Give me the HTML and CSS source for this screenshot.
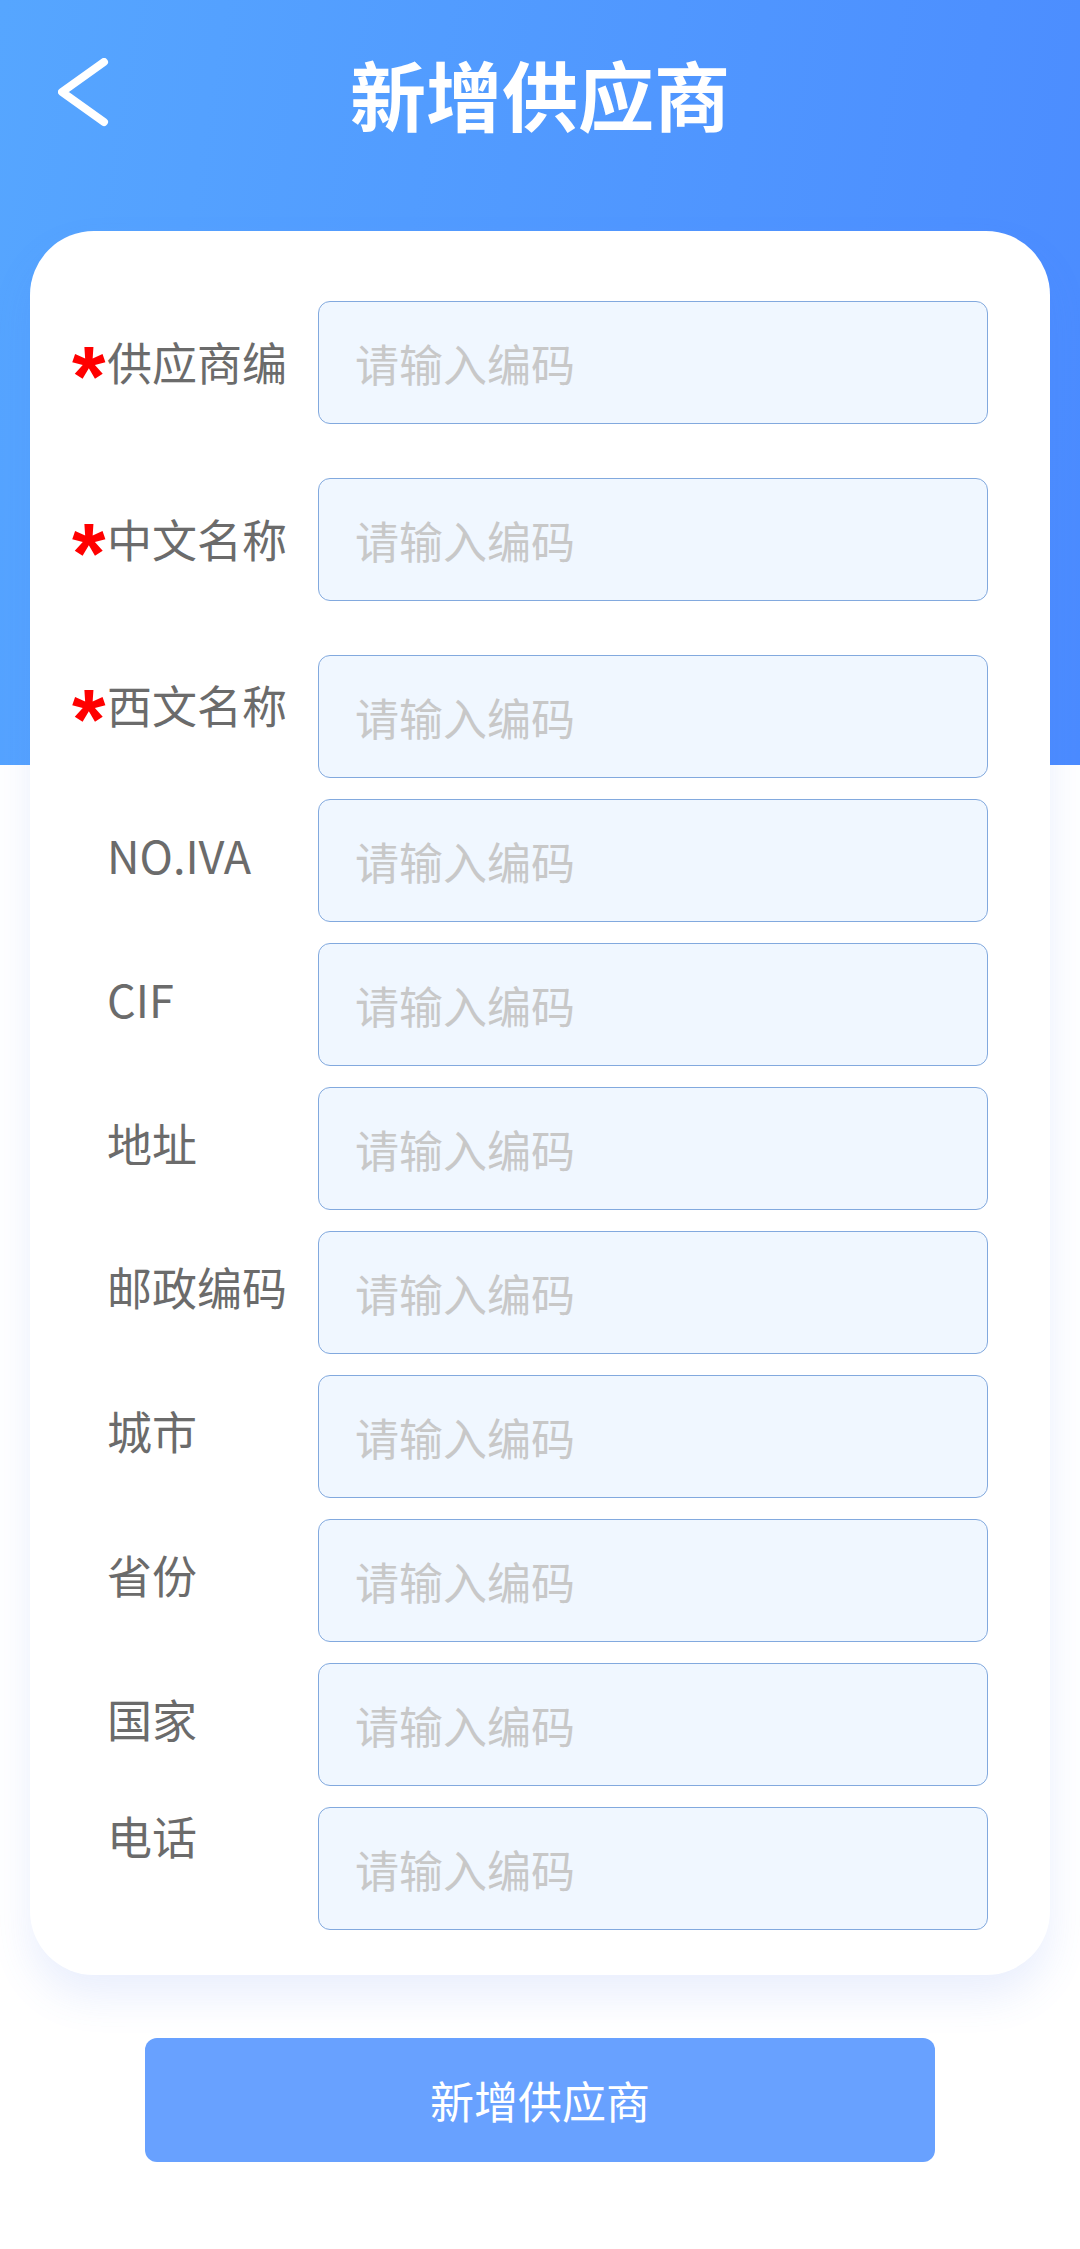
FILE: index.html
```html
<!DOCTYPE html>
<html lang="zh-CN">
<head>
<meta charset="utf-8">
<title>新增供应商</title>
<link rel="stylesheet" href="styles.css">
</head>
<body>
<div class="page">
  <header class="nav">
    <div class="nav-left">
      <svg class="back" width="60" height="80" viewBox="0 0 60 80" aria-hidden="true">
        <polyline points="46,4 4,34 46,64" fill="none" stroke="#fff" stroke-width="8" stroke-linecap="round" stroke-linejoin="round"/>
      </svg>
    </div>
    <h1 class="title">新增供应商</h1>
    <div class="nav-right"></div>
  </header>

  <main class="card">
    <form class="form">
      <div class="row row-wide">
        <label class="label label-center"><span class="req">*</span>供应商编</label>
        <input class="field" placeholder="请输入编码">
      </div>
      <div class="row row-wide">
        <label class="label label-center"><span class="req">*</span>中文名称</label>
        <input class="field" placeholder="请输入编码">
      </div>
      <div class="row">
        <label class="label label-high"><span class="req">*</span>西文名称</label>
        <input class="field" placeholder="请输入编码">
      </div>
      <div class="row">
        <label class="label"><span class="req req-empty"></span>NO.IVA</label>
        <input class="field" placeholder="请输入编码">
      </div>
      <div class="row">
        <label class="label"><span class="req req-empty"></span>CIF</label>
        <input class="field" placeholder="请输入编码">
      </div>
      <div class="row">
        <label class="label"><span class="req req-empty"></span>地址</label>
        <input class="field" placeholder="请输入编码">
      </div>
      <div class="row">
        <label class="label"><span class="req req-empty"></span>邮政编码</label>
        <input class="field" placeholder="请输入编码">
      </div>
      <div class="row">
        <label class="label"><span class="req req-empty"></span>城市</label>
        <input class="field" placeholder="请输入编码">
      </div>
      <div class="row">
        <label class="label"><span class="req req-empty"></span>省份</label>
        <input class="field" placeholder="请输入编码">
      </div>
      <div class="row">
        <label class="label"><span class="req req-empty"></span>国家</label>
        <input class="field" placeholder="请输入编码">
      </div>
      <div class="row">
        <label class="label label-top"><span class="req req-empty"></span>电话</label>
        <input class="field" placeholder="请输入编码">
      </div>
    </form>
  </main>

  <div class="actions">
    <button class="submit" type="button">新增供应商</button>
  </div>
</div>
</body>
</html>
```

FILE: styles.css
```css
* {
  box-sizing: border-box;
}

html, body {
  margin: 0;
  padding: 0;
}

body {
  width: 1080px;
  min-height: 2249px;
  font-family: "Noto Sans CJK SC", "Noto Sans", sans-serif;
  background:
    linear-gradient(100deg, #56a6ff 0%, #4b8bff 100%) top left / 100% 765px no-repeat,
    #ffffff;
}

.page {
  display: flex;
  flex-direction: column;
}

.nav {
  height: 186px;
  display: grid;
  grid-template-columns: 1fr auto 1fr;
  align-items: center;
}

.nav-left {
  padding-left: 58px;
  display: flex;
  align-items: center;
  padding-top: 10px;
}

.back {
  display: block;
}

.title {
  margin: 0;
  color: #ffffff;
  font-size: 76px;
  font-weight: 700;
  line-height: 1;
  letter-spacing: 0;
}

.card {
  margin: 45px 30px 0 30px;
  background: #ffffff;
  border-radius: 64px;
  padding: 70px 62px 45px 0;
  box-shadow: 0 22px 40px rgba(80, 125, 240, 0.12);
}

.form {
  display: flex;
  flex-direction: column;
  gap: 21px;
}

.row {
  display: flex;
  align-items: flex-start;
}

.row-wide {
  margin-bottom: 33px;
}

.label {
  width: 288px;
  flex: none;
  display: flex;
  align-items: flex-start;
  padding-left: 44px;
  padding-top: 30px;
  font-size: 45px;
  line-height: 52px;
  color: #6b6b6b;
  white-space: nowrap;
}

.label-center {
  padding-top: 35px;
}

.label-high {
  padding-top: 24px;
}

.label-top {
  padding-top: 3px;
}

.req {
  width: 33px;
  flex: none;
  color: #ff0000;
  font-family: "Liberation Sans", Arial, sans-serif;
  font-weight: 700;
  font-size: 86px;
  line-height: 52px;
  height: 52px;
  overflow: visible;
  position: relative;
  top: 14px;
  left: -2px;
}

.field {
  flex: 1;
  min-width: 0;
  height: 123px;
  margin: 0;
  border: 1px solid #82a9de;
  border-radius: 12px;
  background: #f0f7ff;
  padding: 0 0 0 36px;
  font-family: "Noto Sans CJK SC", "Noto Sans", sans-serif;
  font-size: 44px;
  color: #333;
  outline: none;
}

.field::placeholder {
  color: #c8c8c8;
}

.actions {
  display: flex;
  justify-content: center;
  padding-top: 63px;
}

.submit {
  width: 790px;
  height: 124px;
  border: none;
  border-radius: 12px;
  background: #68a1ff;
  color: #ffffff;
  font-family: "Noto Sans CJK SC", "Noto Sans", sans-serif;
  font-size: 44px;
  padding: 0;
}
```
